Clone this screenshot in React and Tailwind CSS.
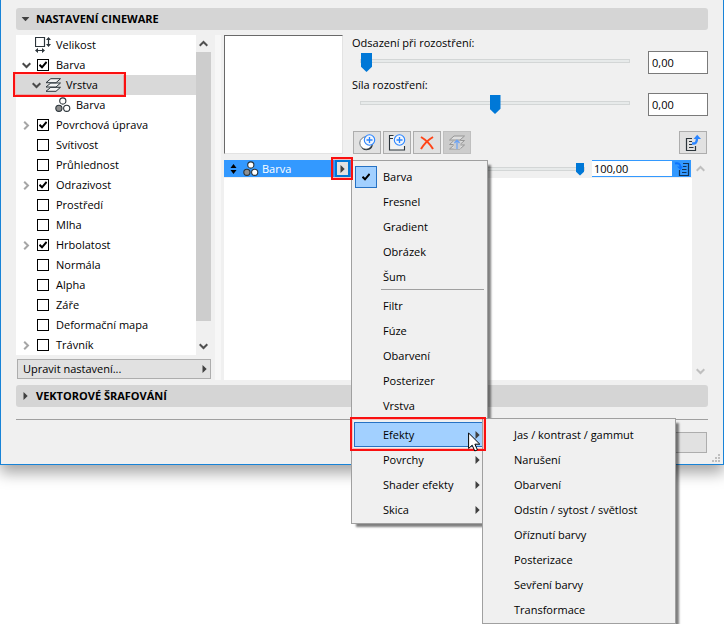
import {useState} from 'react';

const treeItems = [
	{label: "Velikost", icon: "size"},
	{label: "Barva", check: true, checked: true, chevron: "open"},
	{label: "Vrstva", icon: "layers", chevron: "open", level: 1, selected: true},
	{label: "Barva", icon: "circles", level: 2},
	{label: "Povrchová úprava", check: true, checked: true, chevron: "closed"},
	{label: "Svítivost", check: true},
	{label: "Průhlednost", check: true},
	{label: "Odrazivost", check: true, checked: true, chevron: "closed"},
	{label: "Prostředí", check: true},
	{label: "Mlha", check: true},
	{label: "Hrbolatost", check: true, checked: true, chevron: "closed"},
	{label: "Normála", check: true},
	{label: "Alpha", check: true},
	{label: "Záře", check: true},
	{label: "Deformační mapa", check: true},
	{label: "Trávník", check: true, chevron: "closed"},
];

const levelPadding = ["pl-1", "pl-[14px]", "pl-6"];

const shaderItems = ["Barva", "Fresnel", "Gradient", "Obrázek", "Šum"];
const filterItems = ["Filtr", "Fúze", "Obarvení", "Posterizer", "Vrstva"];
const groupItems = ["Efekty", "Povrchy", "Shader efekty", "Skica"];
const effectItems = [
	"Jas / kontrast / gammut",
	"Narušení",
	"Obarvení",
	"Odstín / sytost / světlost",
	"Oříznutí barvy",
	"Posterizace",
	"Sevření barvy",
	"Transformace",
];

const Chevron = ({className = ""}) => (
	<svg className={`size-[9px] ${className}`} viewBox="0 0 9 9" fill="none" stroke="currentColor" strokeWidth="2">
		<path d="M0.7 2.2L4.5 6L8.3 2.2" />
	</svg>
);

const Triangle = ({className = ""}) => (
	<svg className={`h-2 w-[5px] shrink-0 ${className}`} viewBox="0 0 5 8" fill="#404040">
		<path d="M0.5 0L4.7 4L0.5 8Z" />
	</svg>
);

const SizeIcon = () => (
	<svg className="size-4" viewBox="0 0 16 16" fill="none" stroke="#2b343a">
		<path d="M0.5 0.5H9.5V9.5H0.5Z" strokeWidth="1.2" />
		<path d="M13.5 1V8.5M1 13.5H9" strokeWidth="1.2" />
		<path d="M13.5 0L16 3H11ZM13.5 10L16 7H11ZM0 13.5L3 11V16ZM10 13.5L7 11V16Z" fill="#2b343a" stroke="none" />
	</svg>
);

const LayersIcon = () => (
	<svg className="h-[14px] w-[17px]" viewBox="0 0 17 14" fill="#f4f4f4" stroke="#2b343a" strokeLinejoin="round">
		<path d="M1 13.3L5.8 9.3H15.5L11 13.3Z" />
		<path d="M1 9L5.8 5H15.5L11 9Z" />
		<path d="M1 4.7L5.8 0.7H15.5L11 4.7Z" />
	</svg>
);

const CirclesIcon = () => (
	<svg className="size-4" viewBox="0 0 16 16" fill="white" stroke="#2b343a" strokeWidth="1.1">
		<circle cx="7.8" cy="4" r="3.1" />
		<circle cx="3.9" cy="11.3" r="3.1" fill="#8f8f8f" />
		<circle cx="11.7" cy="11.3" r="3.1" />
	</svg>
);

const PlusBadge = () => (
	<g stroke="#2b85ff" strokeWidth="1.1">
		<circle cx="11.5" cy="6" r="5.2" fill="#f0f5fc" />
		<path d="M8.5 6H14.5M11.5 3V9" strokeWidth="1.3" />
	</g>
);

const AddShaderIcon = () => (
	<svg className="size-[18px]" viewBox="0 0 18 18" fill="none">
		<circle cx="8" cy="9" r="6.2" fill="white" stroke="#6d757b" />
		<path d="M3 12.5C6 17 13 16 14.5 9C15.5 14 12 16.2 8.5 16.2C5.5 16.2 3.8 14.8 3 12.5Z" fill="#2b343a" />
		<PlusBadge />
	</svg>
);

const AddFolderIcon = () => (
	<svg className="size-[18px]" viewBox="0 0 18 18" fill="none" stroke="#2b343a" strokeWidth="1.1">
		<path d="M1.5 2H6L7 4.5H16.5V16H1.5Z" fill="#f2f2f2" stroke="none" />
		<path d="M5.5 1.5H1.5V16H16.5V12M1.5 4.5H5" />
		<PlusBadge />
	</svg>
);

const DeleteIcon = () => (
	<svg className="size-4" viewBox="0 0 16 16" fill="none" stroke="#ff4417" strokeWidth="2">
		<path d="M2 14C5 9 9 5 14 2M2 2C7 5 11 9 14 14" />
	</svg>
);

const StackUpIcon = () => (
	<svg className="size-[18px]" viewBox="0 0 18 18" fill="#dedede" stroke="#969696" strokeLinejoin="round">
		<path d="M1.5 15L6 11H16.5L12 15Z" />
		<path d="M1.5 10.5L6 6.5H16.5L12 10.5Z" />
		<path d="M1.5 6L6 2H16.5L12 6Z" />
		<path d="M5.5 6.5H12.5V15H5.5Z" fill="#cccccc" stroke="none" />
		<path d="M9 15V6.5M6.5 9L9 6.2L11.5 9" fill="none" stroke="#6aa2f5" strokeWidth="1.2" />
	</svg>
);

const ExportIcon = () => (
	<svg className="size-[18px]" viewBox="0 0 18 18" fill="none" stroke="#2b343a" strokeWidth="1.2">
		<path d="M8 4.5H2.5V16.5H11.5V12M5 7.5H8M5 10.5H8M5 13.5H9.5" />
		<path d="M8 9.5C12 10 13 8 13 4" stroke="#2b85ff" strokeWidth="2.4" />
		<path d="M9.5 5L13.2 0.7L17 5Z" fill="#2b85ff" stroke="none" />
	</svg>
);

const ImportIcon = () => (
	<svg className="size-4" viewBox="0 0 16 16" fill="none" stroke="#123356" strokeWidth="1.2">
		<path d="M9 2.5H14.5V14.5H5.5V9M9 5.5H12.5M8 8.5H12.5M8 11.5H12.5" />
		<path d="M1 2.5C4 1.5 6.5 3 6.5 6" stroke="#0b74ff" strokeWidth="2" />
		<path d="M3 5.5H9L6.5 9Z" fill="#0b74ff" stroke="none" />
	</svg>
);

const Cursor = () => (
	<svg className="pointer-events-none absolute left-[116px] top-[10px] z-30 h-[20px] w-[13px]" viewBox="0 0 13 20" fill="white" stroke="black">
		<path d="M0.6 1V16.5L4.2 13.2L6.8 19L9.4 17.8L6.9 12.2H11.8Z" />
	</svg>
);

const icons = {size: <SizeIcon />, layers: <LayersIcon />, circles: <CirclesIcon />};

const Marker = ({className}) => (
	<span className={`pointer-events-none absolute border-2 border-[#fa1010] shadow-[inset_0_0_0_1px_rgba(255,0,0,0.2)] ${className}`} />
);

const TreeRow = ({item}) => {
	const [checked, setChecked] = useState(!!item.checked);
	return (
		<li className={`relative flex h-5 items-center ${levelPadding[item.level || 0]} ${item.selected ? "bg-[#d9d9d9]" : ""}`}>
			<span className="flex w-[13px] justify-center">
				{item.chevron === "open" && <Chevron className="text-[#4a4a4a]" />}
				{item.chevron === "closed" && <Chevron className="-rotate-90 text-[#a6a6a6]" />}
			</span>
			<label className="flex items-center gap-[3px]">
				<span className="grid w-5 place-items-center *:col-start-1 *:row-start-1">
					{item.check
						? <input
								type="checkbox"
								className="size-3 appearance-none border border-black bg-white"
								checked={checked}
								onChange={e => setChecked(e.target.checked)}
							/>
						: icons[item.icon]
					}
					{item.check && checked && (
						<svg className="pointer-events-none size-2" viewBox="0 0 8 8" fill="none" stroke="black" strokeWidth="2">
							<path d="M0.5 3.8L3 6.3L7.6 1" />
						</svg>
					)}
				</span>
				{item.label}
			</label>
			{item.selected && <Marker className="-left-[3px] -top-[3px] h-[25px] w-[113px]" />}
		</li>
	);
};

const SectionHeader = ({title, open}) => (
	<button className="flex h-[22px] w-full items-center gap-2 rounded-[3px] bg-[#d5d5d5] pl-[7px] font-bold">
		<span className="flex w-[5px] justify-center">
			<Triangle className={open ? "rotate-90" : ""} />
		</span>
		{title}
	</button>
);

const sliderStyle = `
	h-[18px] appearance-none bg-transparent
	[&::-webkit-slider-runnable-track]:h-1
	[&::-webkit-slider-runnable-track]:border
	[&::-webkit-slider-runnable-track]:border-[#d3d6d6]
	[&::-webkit-slider-runnable-track]:bg-[#e7eaea]
	[&::-webkit-slider-thumb]:appearance-none
	[&::-webkit-slider-thumb]:bg-[#0078d7]
	[&::-webkit-slider-thumb]:[clip-path:polygon(0_0,100%_0,100%_72%,50%_100%,0_72%)]
`;

const SliderField = ({id, label, start}) => {
	const [value, setValue] = useState(start);
	return (
		<div>
			<label htmlFor={id} className="block h-4 leading-4">{label}</label>
			<div className="flex items-start gap-[18px] pl-2">
				<input
					id={id}
					type="range"
					className={`${sliderStyle} mt-px min-w-0 flex-1 [&::-webkit-slider-thumb]:-mt-[7px] [&::-webkit-slider-thumb]:h-[19px] [&::-webkit-slider-thumb]:w-[11px]`}
					value={value}
					onChange={e => setValue(e.target.value)}
				/>
				<input
					aria-label={label}
					className="h-[23px] w-[60px] border border-[#7a7a7a] bg-white pl-[3px] outline-none"
					defaultValue="0,00"
				/>
			</div>
		</div>
	);
};

const ToolButton = ({label, disabled, children}) => (
	<button
		aria-label={label}
		disabled={disabled}
		className={`flex h-[23px] w-7 items-center justify-center border ${disabled ? "border-[#bfbfbf] bg-[#cccccc]" : "border-[#adadad] bg-[#e1e1e1]"}`}
	>
		{children}
	</button>
);

const menuStyle = "absolute z-10 border border-[#a0a0a0] bg-[#f0f0f0] pb-px pt-[3px] text-black shadow-[4px_4px_2px_-1px_rgba(0,0,0,0.5)]";

const MenuItem = ({label, checked, arrow, active, children}) => (
	<li className="relative px-[2px]">
		<button className={`flex h-[25px] w-full items-center border ${active ? "border-[#2672c4] bg-[#a2d0ff]" : "border-transparent"}`}>
			<span className="flex w-7 shrink-0">
				{checked && (
					<span className="flex size-[22px] items-center justify-center border border-[#2672c4] bg-[#a2d0ff]">
						<svg className="size-2" viewBox="0 0 8 8" fill="none" stroke="black" strokeWidth="2">
							<path d="M0.5 3.8L3 6.3L7.6 1" />
						</svg>
					</span>
				)}
			</span>
			<span className="flex-1 text-left">{label}</span>
			{arrow && <Triangle className="mr-1" />}
		</button>
		{children}
	</li>
);

const Separator = () => <li className="ml-[29px] mr-[3px] h-1 border-t border-[#a0a0a0]" />;

const ShaderMenu = () => (
	<ul className={`${menuStyle} left-full top-0 ml-px w-[137px]`}>
		{shaderItems.map(label => (
			<MenuItem key={label} label={label} checked={label === "Barva"} />
		))}
		<Separator />
		{filterItems.map(label => <MenuItem key={label} label={label} />)}
		<Separator />
		{groupItems.map(label => (
			<MenuItem key={label} label={label} arrow active={label === "Efekty"}>
				{label === "Efekty" && (
					<>
						<ul className={`${menuStyle} -top-1 left-[130px] w-[194px]`}>
							{effectItems.map(effect => <MenuItem key={effect} label={effect} />)}
						</ul>
						<Marker className="-left-[2px] -top-[5px] z-20 h-[34px] w-[136px]" />
						<Cursor />
					</>
				)}
			</MenuItem>
		))}
	</ul>
);

const LayerList = () => (
	<div className="mt-[6px] flex flex-1">
		<div className="flex flex-1 flex-col">
			<div className="flex h-[17px] items-center">
				<div className="flex h-full w-[127px] items-center bg-[#3399ff] pl-[6px] text-white">
					<svg className="h-[10px] w-[7px]" viewBox="0 0 7 10" fill="black">
						<path d="M0.5 4L3.5 0L6.5 4ZM0.5 6L3.5 10L6.5 6Z" />
					</svg>
					<span className="ml-[6px]"><CirclesIcon /></span>
					<span className="ml-[3px] flex-1">Barva</span>
					<div className="relative mr-px">
						<button
							aria-label="Typ shaderu"
							className="flex h-[17px] w-[15px] items-center justify-center border-2 border-[#0078d7] bg-[#e1e1e1]"
						>
							<Triangle />
						</button>
						<Marker className="-left-1 -top-[3px] z-20 h-[23px] w-[22px]" />
						<ShaderMenu />
					</div>
				</div>
				<input
					type="range"
					aria-label="Krytí"
					className={`${sliderStyle} ml-2 mr-[7px] min-w-0 flex-1 [&::-webkit-slider-thumb]:-mt-[5px] [&::-webkit-slider-thumb]:h-[13px] [&::-webkit-slider-thumb]:w-2`}
					defaultValue={100}
				/>
				<input
					aria-label="Krytí v procentech"
					className="h-full w-20 border-y border-[#3399ff] bg-white pl-[2px] outline-none"
					defaultValue="100,00"
				/>
				<button aria-label="Vložit" className="flex h-full w-[19px] items-center justify-center bg-[#3399ff]">
					<ImportIcon />
				</button>
				<span className="w-px" />
			</div>
			<div className="mt-px flex-1 bg-white" />
		</div>
		<div className="flex w-4 flex-col items-center justify-between py-1 text-[#bfbfbf]">
			<Chevron className="rotate-180" />
			<Chevron />
		</div>
	</div>
);

const App = () => {
	return (
		<div className="relative min-h-screen bg-white font-['Open_Sans','Noto_Sans',sans-serif] text-[11px] leading-4 text-black">
			<div className="border-x border-b border-[#1883d7] bg-[#f0f0f0] pb-[11px] pl-[15px] pr-[15px] pt-2 shadow-[0_8px_14px_rgba(0,0,0,0.35)]">
				<SectionHeader title="NASTAVENÍ CINEWARE" open />
				<div className="my-[5px] flex">
					<div className="w-[195px] shrink-0">
						<div className="flex">
							<ul className="flex-1 bg-white">
								{treeItems.map((item, index) => <TreeRow key={index} item={item} />)}
							</ul>
							<div className="flex w-[15px] flex-col items-center text-[#505050]">
								<span className="flex h-[17px] items-center"><Chevron className="rotate-180" /></span>
								<span className="w-full flex-1 bg-[#cdcdcd]" />
								<span className="flex h-[34px] items-center pt-4"><Chevron /></span>
							</div>
						</div>
						<button className="ml-px mt-1 flex h-5 w-[194px] items-center justify-between border border-[#adadad] bg-[#e1e1e1] pl-[5px] pr-[3px]">
							Upravit nastavení...
							<Triangle />
						</button>
					</div>
					<div className="ml-1 w-[6px] bg-[#f7f7f7]" />
					<div className="ml-[3px] flex min-h-[345px] flex-1 flex-col">
						<div className="flex h-[119px]">
							<div className="w-[119px] border border-b-[#e3e3e3] border-l-[#696969] border-r-[#e3e3e3] border-t-[#696969] bg-white" />
							<div className="ml-[9px] flex flex-1 flex-col gap-[3px]">
								<SliderField id="offset" label="Odsazení při rozostření:" start={0} />
								<SliderField id="strength" label="Síla rozostření:" start={50} />
								<div className="mr-px mt-auto flex gap-[2px] pl-px">
									<ToolButton label="Nový shader"><AddShaderIcon /></ToolButton>
									<ToolButton label="Nová složka"><AddFolderIcon /></ToolButton>
									<ToolButton label="Smazat"><DeleteIcon /></ToolButton>
									<ToolButton label="Přesunout výše" disabled><StackUpIcon /></ToolButton>
									<span className="flex-1" />
									<ToolButton label="Načíst"><ExportIcon /></ToolButton>
								</div>
							</div>
						</div>
						<LayerList />
					</div>
				</div>
				<SectionHeader title="VEKTOROVÉ ŠRAFOVÁNÍ" />
				<div className="mt-3 flex justify-end border-t border-[#a0a0a0] pr-px pt-3">
					<button aria-label="Zavřít" className="h-[21px] w-20 border border-[#adadad] bg-[#e1e1e1]" />
				</div>
				<div className="relative">
					<svg className="absolute -right-3 top-px size-2" viewBox="0 0 8 8" fill="#bfbfbf">
						<path d="M6 0H8V2H6ZM3 3H5V5H3ZM6 3H8V5H6ZM0 6H2V8H0ZM3 6H5V8H3ZM6 6H8V8H6Z" />
					</svg>
				</div>
			</div>
		</div>
	);
};

export default App;
